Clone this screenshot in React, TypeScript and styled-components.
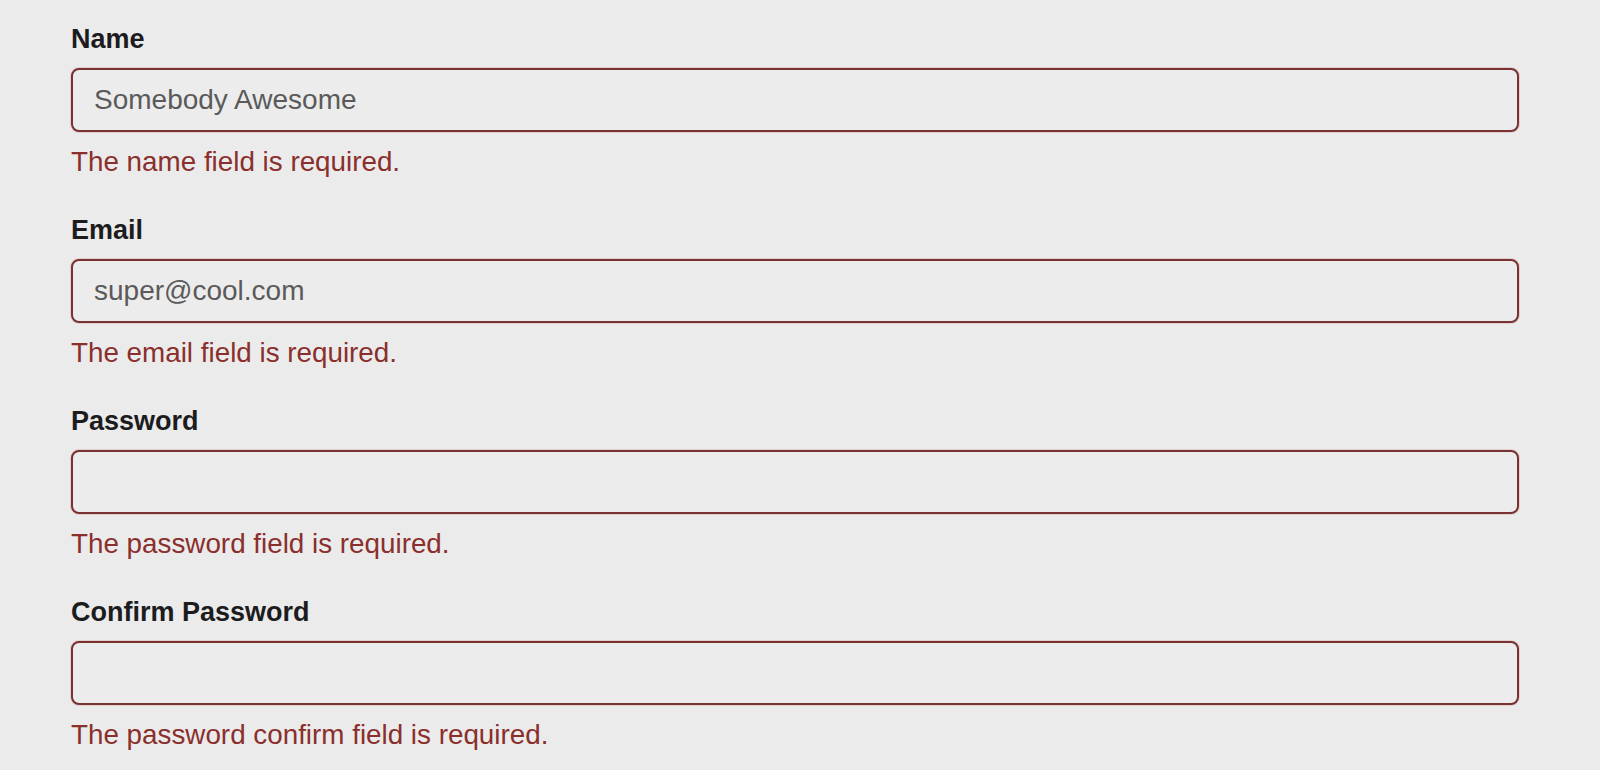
import React from 'react'
import styled, { createGlobalStyle } from 'styled-components'

const GlobalStyle = createGlobalStyle`
  html, body {
    margin: 0;
    padding: 0;
    background: #ebebeb;
  }
  body {
    font-family: "Liberation Sans", Arial, Helvetica, sans-serif;
  }
`

const Form = styled.form`
  display: flex;
  flex-direction: column;
  gap: 36px;
  padding: 23px 0 0 71px;
  width: 1448px;
`

const Group = styled.div`
  display: flex;
  flex-direction: column;
`

const Label = styled.label`
  font-size: 27px;
  line-height: 32px;
  font-weight: 700;
  color: #1c1c1e;
  margin-bottom: 13px;
`

const Input = styled.input`
  box-sizing: border-box;
  width: 100%;
  height: 64px;
  padding: 0 21px;
  border: 2px solid #773231;
  border-radius: 8px;
  background: #ececec;
  box-shadow: 0 0 0 1px rgba(200, 120, 120, 0.25);
  font-family: inherit;
  font-size: 28px;
  color: #5a5a5a;
  outline: none;

  &::placeholder {
    color: #5a5a5a;
  }
`

const ErrorText = styled.span`
  margin-top: 14px;
  font-size: 27.8px;
  line-height: 32px;
  color: #8a2f2c;
`

const fields = [
  { label: 'Name', type: 'text', value: 'Somebody Awesome', error: 'The name field is required.' },
  { label: 'Email', type: 'text', value: 'super@cool.com', error: 'The email field is required.' },
  { label: 'Password', type: 'password', value: '', error: 'The password field is required.' },
  { label: 'Confirm Password', type: 'password', value: '', error: 'The password confirm field is required.' },
]

export default function App() {
  return (
    <>
      <GlobalStyle />
      <Form onSubmit={(e) => e.preventDefault()}>
        {fields.map((field) => (
          <Group key={field.label}>
            <Label>{field.label}</Label>
            <Input type={field.type} defaultValue={field.value} />
            <ErrorText>{field.error}</ErrorText>
          </Group>
        ))}
      </Form>
    </>
  )
}
